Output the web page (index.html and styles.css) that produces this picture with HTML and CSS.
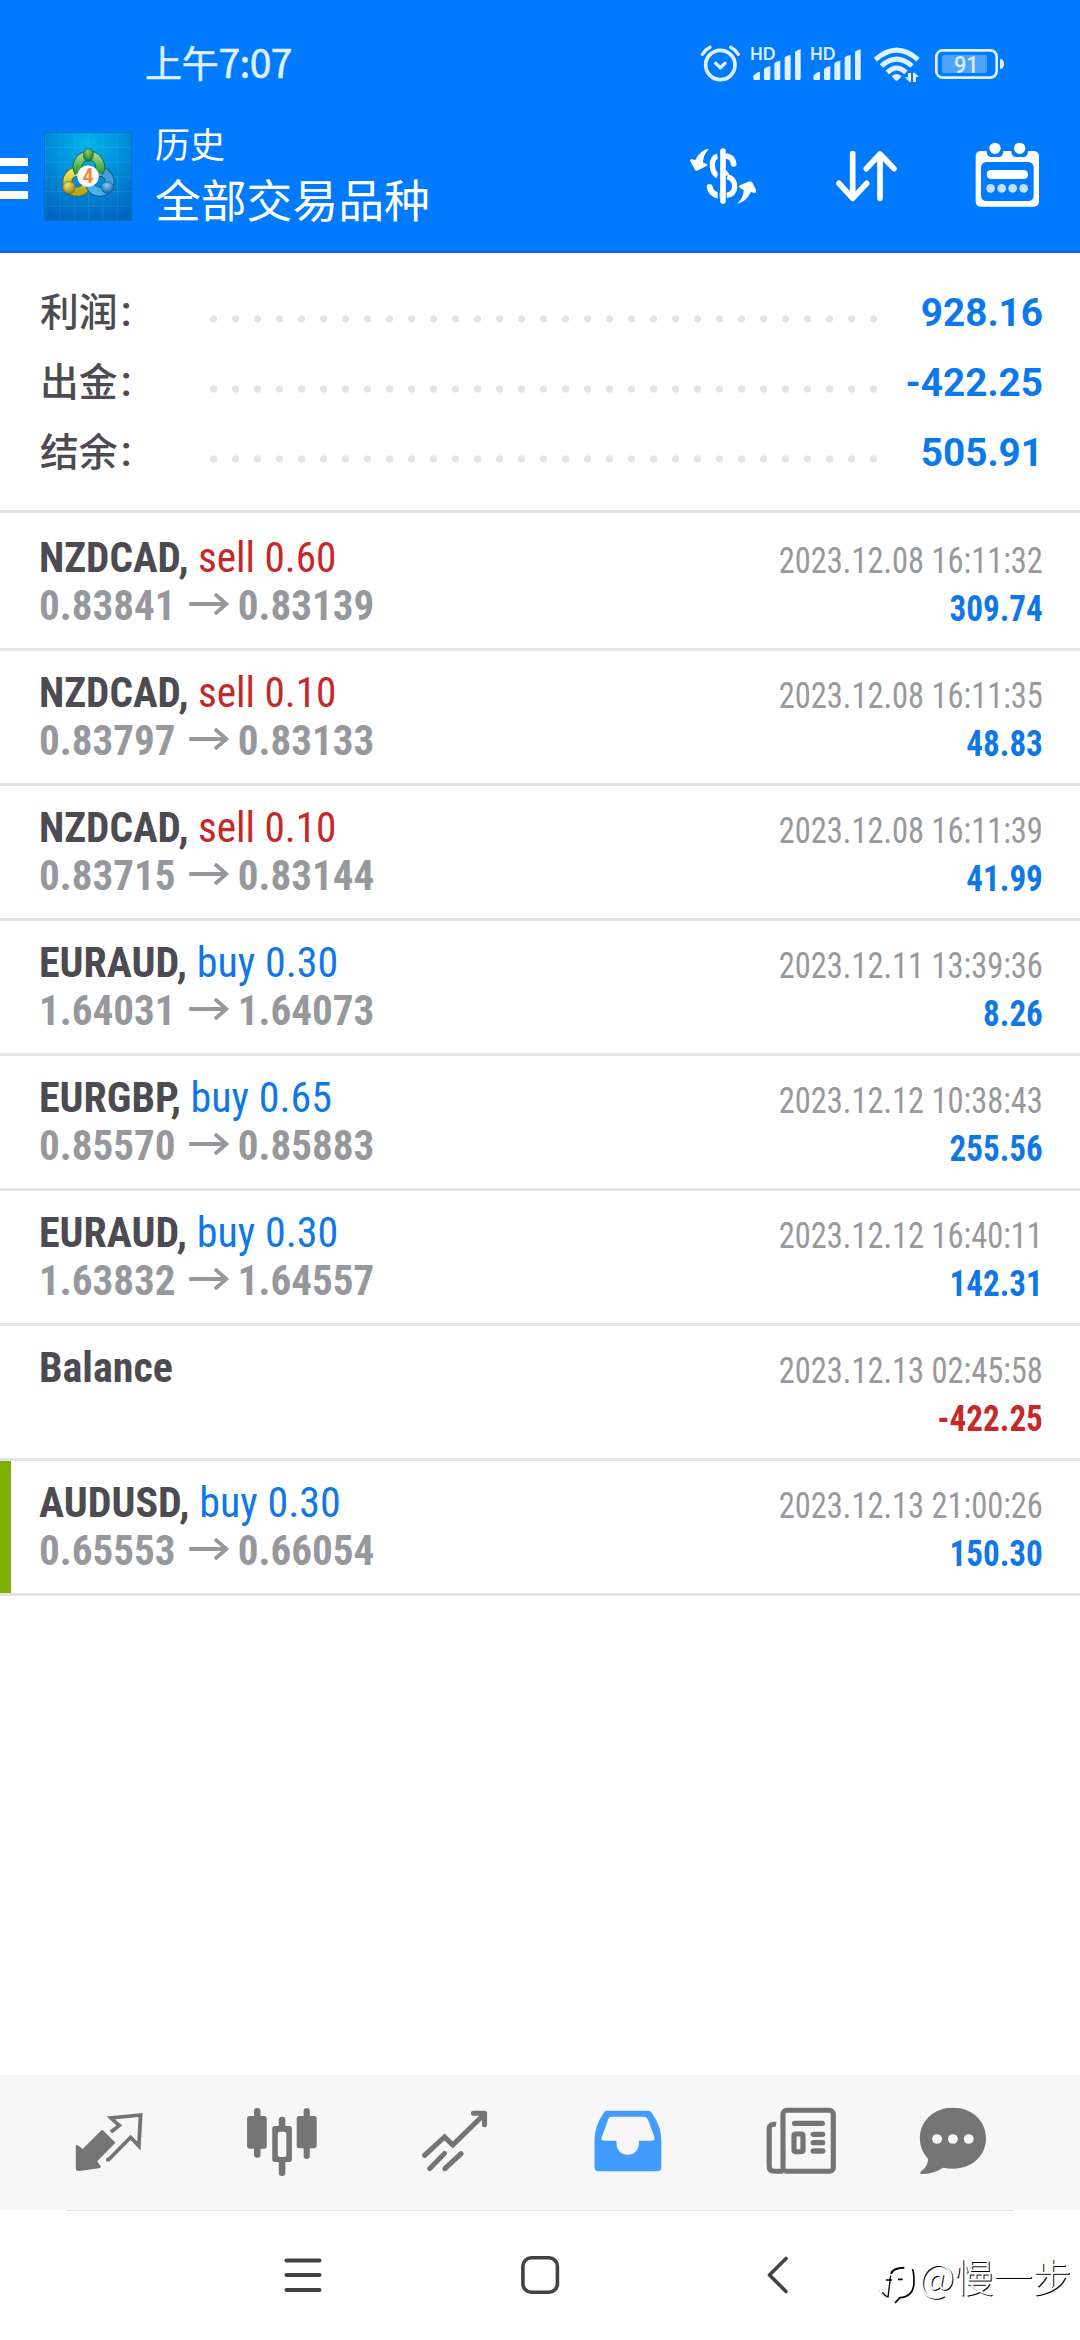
FILE: index.html
```html
<!DOCTYPE html>
<html lang="zh-CN">
<head>
<meta charset="utf-8">
<title>历史</title>
<link rel="stylesheet" href="styles.css">
</head>
<body>
<header class="top">
  <div class="status">
    <span class="clock"><span class="clock-cn">上午</span>7:07</span>
    <div class="status-icons">
      <svg class="alarm" viewBox="180 132 123 120" fill="none" stroke="#dff1ff" stroke-linecap="round">
        <circle cx="241" cy="195" r="44" stroke-width="11"/>
        <path d="M227 190L241 203L255 190" stroke-width="10" stroke-linejoin="round"/>
        <path d="M187 163Q196 149 210 142M272 142Q286 149 295 163" stroke-width="10"/>
      </svg>
      <svg class="signal" viewBox="330 132 156 120" fill="#dff1ff">
        <text class="hd" x="330" y="180" textLength="76" lengthAdjust="spacingAndGlyphs">HD</text>
        <path d="M340 227Q348 216 360 215V236Q360 240 356 240H344Q340 240 340 236ZM372 207Q380 200 391 199V236Q391 240 387 240H376Q372 240 372 236ZM403 190Q410 183 421 182V236Q421 240 417 240H407Q403 240 403 236ZM434 172Q441 166 452 165V236Q452 240 448 240H438Q434 240 434 236ZM465 156Q472 149 482 148V236Q482 240 478 240H469Q465 240 465 236Z"/>
      </svg>
      <svg class="signal" viewBox="330 132 156 120" fill="#dff1ff">
        <text class="hd" x="330" y="180" textLength="76" lengthAdjust="spacingAndGlyphs">HD</text>
        <path d="M340 227Q348 216 360 215V236Q360 240 356 240H344Q340 240 340 236ZM372 207Q380 200 391 199V236Q391 240 387 240H376Q372 240 372 236ZM403 190Q410 183 421 182V236Q421 240 417 240H407Q403 240 403 236ZM434 172Q441 166 452 165V236Q452 240 448 240H438Q434 240 434 236ZM465 156Q472 149 482 148V236Q482 240 478 240H469Q465 240 465 236Z"/>
      </svg>
      <svg class="wifi" viewBox="699 132 144 120">
        <g fill="none" stroke="#dff1ff" stroke-width="15">
          <path d="M706 179Q770 122 834 179"/>
          <path d="M724 198Q770 157 816 198"/>
          <path d="M742 217Q770 191 798 217"/>
        </g>
        <path d="M755 229Q770 215 785 229L774 241Q770 244 766 241Z" fill="#dff1ff"/>
        <path d="M795 232H804V219H813V246H808ZM819 246V218H824L837 231H828V246Z" fill="#dff1ff"/>
      </svg>
      <svg class="battery" viewBox="882 132 213 120">
        <rect x="889" y="151" width="181" height="82" rx="19" fill="none" stroke="#dff1ff" stroke-width="8"/>
        <rect x="906" y="165" width="135" height="54" rx="6" fill="#4da3ff"/>
        <path d="M1080 177Q1092 177 1092 192Q1092 207 1080 207Z" fill="#dff1ff"/>
        <text class="charge" x="942" y="219" textLength="74" lengthAdjust="spacingAndGlyphs">91</text>
      </svg>
    </div>
  </div>
  <div class="appbar">
    <div class="menu"><i></i><i></i><i></i></div>
    <svg class="logo" viewBox="42 35 264 266">
      <defs>
        <radialGradient id="sky" cx=".5" cy=".12" r=".95"><stop offset="0" stop-color="#00b4ee"/><stop offset=".5" stop-color="#0089d6"/><stop offset="1" stop-color="#0064bd"/></radialGradient>
        <linearGradient id="gr" x1="0" y1="0" x2="0" y2="1"><stop offset="0" stop-color="#a0d58c"/><stop offset="1" stop-color="#279a35"/></linearGradient>
        <linearGradient id="ye" x1="0" y1="0" x2="0" y2="1"><stop offset="0" stop-color="#ece761"/><stop offset="1" stop-color="#b6a71e"/></linearGradient>
        <linearGradient id="bl" x1="1" y1="0" x2="0" y2="1"><stop offset="0" stop-color="#3f9cd8"/><stop offset="1" stop-color="#49b5ef"/></linearGradient>
        <radialGradient id="gb" cx=".45" cy=".3" r=".7"><stop offset="0" stop-color="#8fd179"/><stop offset="1" stop-color="#14701e"/></radialGradient>
        <radialGradient id="yb" cx=".4" cy=".3" r=".7"><stop offset="0" stop-color="#f0e878"/><stop offset="1" stop-color="#97830c"/></radialGradient>
        <radialGradient id="bb" cx=".45" cy=".3" r=".7"><stop offset="0" stop-color="#8accf5"/><stop offset="1" stop-color="#0c63aa"/></radialGradient>
      </defs>
      <rect x="43" y="36" width="262" height="264" fill="url(#sky)" stroke="#0867b4" stroke-width="2"/>
      <path d="M47 36V300M90 36V300M134 36V300M176 36V300M219 36V300M262 36V300M43 81H305M43 125H305M43 169H305M43 213H305M43 257H305" stroke="#5bc8ff" stroke-opacity=".25" stroke-width="2"/>
      <g fill="none">
        <circle cx="142" cy="184" r="30" stroke="#62611d" stroke-width="29"/>
        <circle cx="142" cy="184" r="30" stroke="url(#ye)" stroke-width="24"/>
        <circle cx="209" cy="184" r="30" stroke="#16517e" stroke-width="29"/>
        <circle cx="209" cy="184" r="30" stroke="url(#bl)" stroke-width="24"/>
        <path d="M147 156A34 34 0 1 1 206 156" stroke="#176b2b" stroke-width="29"/>
        <path d="M147 156A34 34 0 1 1 206 156" stroke="url(#gr)" stroke-width="24"/>
      </g>
      <ellipse cx="175" cy="103" rx="15" ry="20" fill="url(#gb)" stroke="#176b2b" stroke-width="2"/>
      <ellipse cx="117" cy="201" rx="19" ry="18" fill="url(#yb)" stroke="#706413" stroke-width="2"/>
      <ellipse cx="232" cy="201" rx="19" ry="17" fill="url(#bb)" stroke="#11588f" stroke-width="2"/>
      <circle cx="174" cy="167" r="32" fill="#fafafa"/>
      <text class="four" x="174" y="188" text-anchor="middle">4</text>
    </svg>
    <div class="titles"><span class="sub">历史</span><span class="main">全部交易品种</span></div>
    <div class="actions">
      <svg class="ic-dollar" viewBox="144 438 204 180">
        <g fill="none" stroke="#fff">
          <path d="M246 453V603" stroke-width="17" stroke-linecap="round"/>
          <path d="M230 468Q214 472 214 495Q214 518 230 528" stroke-width="16"/>
          <path d="M259 469Q275 472 278 492" stroke-width="17" stroke-linecap="round"/>
          <path d="M259 530Q281 536 281 560Q280 584 257 586" stroke-width="16"/>
          <path d="M258 526L249 515" stroke-width="16"/>
          <path d="M206 561Q209 580 230 586" stroke-width="18" stroke-linecap="round"/>
        </g>
        <path d="M233 450V610" stroke="#007aff" stroke-width="6"/>
        <path d="M204 446Q178 449 163 480L150 477Q145 480 149 486L162 510Q166 514 172 511L195 499Q202 494 196 491L186 488Q185 467 204 446Z" fill="#fff"/>
        <path d="M289 611Q314 607 330 576L341 579Q347 578 345 570L335 549Q331 542 322 545L297 556Q291 561 298 565L308 570Q309 590 289 611Z" fill="#fff"/>
      </svg>
      <svg class="ic-sort" viewBox="578 444 195 168" fill="none" stroke="#fff" stroke-width="17" stroke-linecap="round" stroke-linejoin="round">
        <path d="M634 461V594M593 550L634 595L676 550M716 595V462M675 506L716 462L758 506"/>
      </svg>
      <svg class="ic-cal" viewBox="1000 423 201 204">
        <rect x="1005" y="453" width="190" height="167" rx="15" fill="#fff"/>
        <g fill="#007aff"><rect x="1021" y="486" width="158" height="117" rx="16"/><path d="M1038 448H1088V456Q1086 471 1074 471H1052Q1040 471 1038 456ZM1112 448H1162V456Q1160 471 1148 471H1126Q1114 471 1112 456Z"/></g>
        <g fill="#fff"><circle cx="1063" cy="445" r="17"/><circle cx="1137" cy="445" r="17"/><rect x="1038" y="510" width="124" height="27" rx="13"/></g>
        <g fill="#c2e1ff"><circle cx="1050" cy="565" r="13"/><circle cx="1083" cy="565" r="13"/><circle cx="1116" cy="565" r="13"/><circle cx="1149" cy="565" r="13"/></g>
      </svg>
    </div>
  </div>
</header>

<section class="summary">
  <div class="sum"><span class="label">利润<b>:</b></span><span class="dots"></span><span class="value">928.16</span></div>
  <div class="sum"><span class="label">出金<b>:</b></span><span class="dots"></span><span class="value">-422.25</span></div>
  <div class="sum"><span class="label">结余<b>:</b></span><span class="dots"></span><span class="value">505.91</span></div>
</section>

<main class="deals">
  <article class="deal"><div class="left"><div class="sym is-sell"><b>NZDCAD,</b> <span class="sell">sell 0.60</span></div><div class="price">0.83841<svg class="arrow" viewBox="0 0 42 22"><path d="M0 11H39M27 1L39 11L27 21"/></svg>0.83139</div></div><div class="right"><div class="time">2023.12.08 16:11:32</div><div class="profit">309.74</div></div></article>
  <article class="deal"><div class="left"><div class="sym is-sell"><b>NZDCAD,</b> <span class="sell">sell 0.10</span></div><div class="price">0.83797<svg class="arrow" viewBox="0 0 42 22"><path d="M0 11H39M27 1L39 11L27 21"/></svg>0.83133</div></div><div class="right"><div class="time">2023.12.08 16:11:35</div><div class="profit">48.83</div></div></article>
  <article class="deal"><div class="left"><div class="sym is-sell"><b>NZDCAD,</b> <span class="sell">sell 0.10</span></div><div class="price">0.83715<svg class="arrow" viewBox="0 0 42 22"><path d="M0 11H39M27 1L39 11L27 21"/></svg>0.83144</div></div><div class="right"><div class="time">2023.12.08 16:11:39</div><div class="profit">41.99</div></div></article>
  <article class="deal"><div class="left"><div class="sym"><b>EURAUD,</b> <span class="buy">buy 0.30</span></div><div class="price">1.64031<svg class="arrow" viewBox="0 0 42 22"><path d="M0 11H39M27 1L39 11L27 21"/></svg>1.64073</div></div><div class="right"><div class="time">2023.12.11 13:39:36</div><div class="profit">8.26</div></div></article>
  <article class="deal"><div class="left"><div class="sym"><b>EURGBP,</b> <span class="buy">buy 0.65</span></div><div class="price">0.85570<svg class="arrow" viewBox="0 0 42 22"><path d="M0 11H39M27 1L39 11L27 21"/></svg>0.85883</div></div><div class="right"><div class="time">2023.12.12 10:38:43</div><div class="profit">255.56</div></div></article>
  <article class="deal"><div class="left"><div class="sym"><b>EURAUD,</b> <span class="buy">buy 0.30</span></div><div class="price">1.63832<svg class="arrow" viewBox="0 0 42 22"><path d="M0 11H39M27 1L39 11L27 21"/></svg>1.64557</div></div><div class="right"><div class="time">2023.12.12 16:40:11</div><div class="profit">142.31</div></div></article>
  <article class="deal"><div class="left"><div class="sym"><b>Balance</b></div></div><div class="right"><div class="time">2023.12.13 02:45:58</div><div class="profit loss">-422.25</div></div></article>
  <article class="deal marked"><div class="left"><div class="sym"><b>AUDUSD,</b> <span class="buy">buy 0.30</span></div><div class="price">0.65553<svg class="arrow" viewBox="0 0 42 22"><path d="M0 11H39M27 1L39 11L27 21"/></svg>0.66054</div></div><div class="right"><div class="time">2023.12.13 21:00:26</div><div class="profit">150.30</div></div></article>
</main>

<nav class="tabs">
  <svg viewBox="205 135 220 225" preserveAspectRatio="none">
    <path d="M297 210L334 248L281 304L292 320Q292 324 286 325L228 333Q219 334 219 325V256Q222 253 227 257L239 267L291 213Q294 209 297 210Z" fill="#747474"/>
    <path d="M321 216L345 196L321 174L407 165L402 258L378 232L314 299H307" fill="none" stroke="#747474" stroke-width="11"/>
  </svg>
  <svg viewBox="706 135 220 225" preserveAspectRatio="none" fill="#747474">
    <rect x="735" y="144" width="19" height="149" rx="9"/><rect x="715" y="168" width="57" height="98" rx="7"/>
    <rect x="879" y="144" width="18" height="153" rx="9"/><rect x="859" y="168" width="58" height="97" rx="7"/>
    <rect x="807" y="170" width="19" height="178" rx="9"/><rect x="788" y="198" width="57" height="108" rx="8"/>
    <rect x="804" y="215" width="25" height="76" rx="7" fill="#f7f7f7"/>
  </svg>
  <svg viewBox="1209 135 220 225" preserveAspectRatio="none" fill="none" stroke="#747474" stroke-width="15" stroke-linecap="round">
    <path d="M1231 286L1289 231L1313 255L1405 162"/><path d="M1373 160H1405V194" stroke-width="15" stroke-linejoin="round"/>
    <path d="M1246 326L1289 280M1290 326L1337 281"/>
  </svg>
  <svg viewBox="144 135 220 225" preserveAspectRatio="none">
    <path d="M192 152H314Q319 152 323 158Q351 198 351 240V322Q351 334 339 334H169Q157 334 157 322V240Q157 198 184 158Q188 152 192 152Z" fill="#429bff"/>
    <path d="M206 170H301Q309 170 312 178L331 232Q333 242 323 242H286V250C286 296 221 296 221 250V242H185Q174 242 178 232L197 178Q199 170 206 170Z" fill="#f7f7f7"/>
  </svg>
  <svg viewBox="647 135 220 225" preserveAspectRatio="none" fill="none" stroke="#747474">
    <rect x="705" y="151" width="146" height="183" rx="11" stroke-width="15"/>
    <path d="M685 193Q665 190 665 208V319Q665 334 680 334H705" stroke-width="15"/>
    <path d="M739 190H819M793 223H820M793 248H820M793 273H820" stroke-width="16" stroke-linecap="round"/>
    <rect x="737" y="222" width="26" height="53" rx="4" stroke-width="15"/>
  </svg>
  <svg viewBox="1089 135 220 225" preserveAspectRatio="none">
    <path d="M1199 143C1257 143 1295 184 1295 235C1295 286 1257 326 1199 326Q1184 326 1171 323Q1142 342 1108 342Q1101 340 1106 335Q1126 321 1127 297Q1103 271 1103 235C1103 184 1142 143 1199 143Z" fill="#747474"/>
    <g fill="#f7f7f7"><circle cx="1153" cy="237" r="14.5"/><circle cx="1199" cy="237" r="14.5"/><circle cx="1245" cy="237" r="14.5"/></g>
  </svg>
</nav>
<footer class="sysnav">
  <svg viewBox="0 0 44 44" fill="none" stroke="#424242" stroke-width="4" stroke-linecap="round"><path d="M5.500 7.500H38.500M5.500 22H38.500M5.500 37H38.500"/></svg>
  <svg viewBox="0 0 44 44" fill="none" stroke="#424242" stroke-width="3.600"><rect x="4.900" y="4.700" width="34.500" height="34.500" rx="8.500"/></svg>
  <svg viewBox="0 0 44 44" fill="none" stroke="#424242" stroke-width="3.600" stroke-linecap="round" stroke-linejoin="round"><path d="M31 5.500L14.500 22L31 38.500"/></svg>
  <div class="mark">
    <svg viewBox="51 67 123 132" fill="none" stroke="#000">
      <path d="M93 103Q98 84 133 84" stroke-width="6"/>
      <path d="M78 121H96M114 119H128" stroke-width="5"/>
      <path d="M92 108L84 172Q74 168 67 158" stroke-width="4"/>
      <path d="M157 89Q162 96 162 128C162 158 144 173 120 174L105 190" stroke-width="5"/>
      <path d="M56 148Q62 168 82 176" stroke="#ccc" stroke-width="2"/>
    </svg>
    <span>@慢一步</span>
  </div>
</footer>
</body>
</html>
```
FILE: styles.css
```css
* { box-sizing: border-box; }
body {
  margin: 0;
  width: 1080px;
  height: 2340px;
  display: flex;
  flex-direction: column;
  background: #fff;
  font-family: Roboto, "Noto Sans CJK SC", sans-serif;
  overflow: hidden;
}
svg { display: block; flex: none; }

/* Header */
.top { height: 253px; flex: none; background: #007aff; border-bottom: 2px solid #1269c0; color: #fff; }
.status { height: 101px; padding: 27px 75px 0 145px; display: flex; align-items: center; justify-content: space-between; }
.clock { font: 400 39px/50px "Noto Sans CJK SC", sans-serif; color: #dff1ff; letter-spacing: -.600px; padding-bottom: 6px; -webkit-text-stroke: .6px #dff1ff; }
.clock-cn { font-size: 37px; letter-spacing: -.300px; }
.status-icons { display: flex; }
.status-icons svg { height: 40px; }
.alarm { width: 41px; margin-right: 9px; }
.signal { width: 52px; margin-right: 8px; }
.wifi { width: 48px; margin: 0 13px 0 3px; }
.battery { width: 71px; }
.hd { font: 700 50px Lato, sans-serif; }
.charge { font: 500 73px Roboto, sans-serif; fill: #dff1ff; }
.appbar { height: 150px; display: flex; align-items: center; }
.menu { width: 28px; margin: 4px 16px 0 0; display: grid; gap: 8.500px; }
.menu i { height: 8px; background: #fff; }
.logo { width: 88px; height: 89px; }
.four { font: 700 58px Roboto, sans-serif; fill: #f28a30; }
.titles { margin-left: 23px; padding-bottom: 8px; display: flex; flex-direction: column; font-family: "Noto Sans CJK SC", sans-serif; white-space: nowrap; }
.sub { font-size: 35px; line-height: 51px; }
.main { font-size: 45.800px; line-height: 60px; }
.actions { margin-left: auto; padding-right: 39px; display: flex; align-items: center; }
.ic-dollar { width: 68px; height: 60px; }
.ic-sort { width: 65px; height: 56px; margin-left: 77px; }
.ic-cal { width: 67px; height: 68px; margin: 0 0 2px 75px; }

/* Account summary */
.summary { height: 263px; flex: none; padding: 24px 37px 0 40px; background: linear-gradient(#e3e3e3, #e3e3e3) 0 257px / 100% 3px no-repeat; }
.sum { height: 70px; display: flex; align-items: center; }
.label { width: 169px; padding-bottom: 6px; font: 500 38.800px/64px "Noto Sans CJK SC", sans-serif; color: #4c4b51; }
.label b { font: 500 43px Roboto, sans-serif; margin-left: 3px; }
.dots { width: 682px; height: 8px; margin-top: 14px; background: radial-gradient(circle at 4.500px 4px, #e4e4e4 3.300px, transparent 4px) 0 0 / 22px 8px repeat-x; }
.value { margin-left: auto; padding-top: 1px; font-weight: 700; font-size: 38.700px; color: #0b79ec; }

/* Deals */
.deal { height: 135px; padding: 17px 37px 0 39px; border-bottom: 3px solid #e3e3e3; display: flex; justify-content: space-between; font-family: "Roboto Condensed", Roboto, sans-serif; font-stretch: 75%; }
.marked { box-shadow: inset 11px 0 #7db000; }
.sym, .price { font-size: 43px; line-height: 48px; white-space: pre; transform-origin: left; }
.sym { color: #4c4b51; transform: scaleX(.977); }
.is-sell { transform: scaleX(.959); }
.sell { color: #c62828; }
.buy { color: #1077e8; }
.price { display: flex; align-items: center; color: #97989c; font-weight: 700; transform: scaleX(.956); }
.arrow { width: 42px; height: 22px; margin: -3px 9px 0 14px; fill: none; stroke: #97989c; stroke-width: 3.800; }
.right { text-align: right; font-size: 36px; line-height: 48px; padding-top: 4px; }
.time, .profit { transform-origin: right; }
.time { color: #98999c; transform: scaleX(.902); }
.profit { font-weight: 700; color: #1077e8; transform: scaleX(.92); }
.profit.loss { color: #c62828; }

/* Bottom bars */
.tabs { height: 135px; flex: none; margin-top: auto; padding-left: 22px; background: #f7f7f7; display: grid; grid-template-columns: repeat(5, 173px) 132px; align-items: center; justify-items: center; }
.tabs svg { width: 75.800px; height: 75px; }
.sysnav { height: 130px; flex: none; position: relative; display: grid; grid-template-columns: repeat(3, 237px); justify-content: center; align-items: center; justify-items: center; background: linear-gradient(#e2e2e2, #e2e2e2) 66px 0 / 948px 1px no-repeat #fff; }
.sysnav > svg { width: 44px; height: 44px; }
.mark { position: absolute; left: 877px; top: 52px; height: 44px; display: flex; align-items: center; }
.mark svg { width: 41px; height: 44px; }
.mark span { margin: -19px 0 0 1px; font: 300 39px/44px "Noto Sans CJK SC", sans-serif; color: #fff; text-shadow: 1px 1px 0 #000, 0 0 1px #ddd; white-space: nowrap; }
```
